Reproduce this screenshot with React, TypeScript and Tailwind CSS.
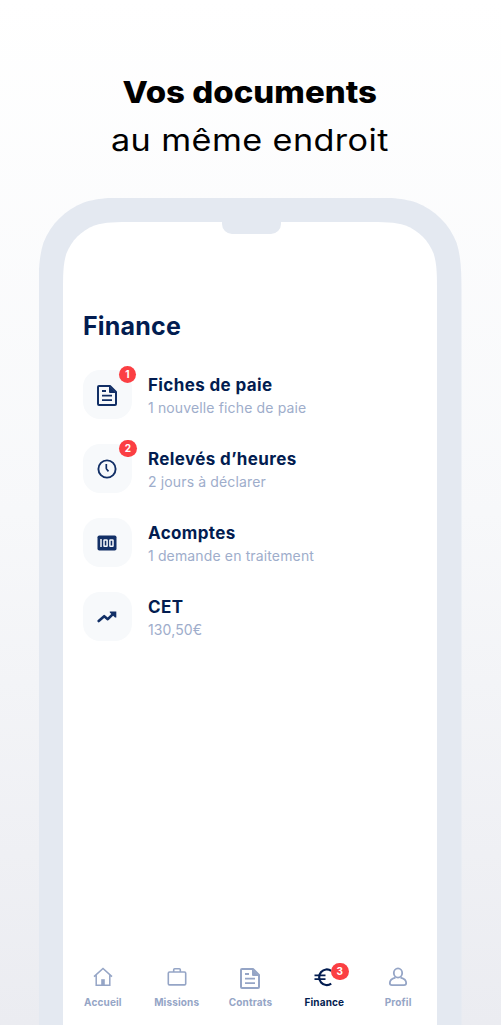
import type { ReactNode } from "react";

function phoneShape(w: number, h: number, r: number) {
  const p = (n: number) => +(n * r).toFixed(2);
  const x = (n: number) => +(w - n * r).toFixed(2);
  return `path("M0 ${h}V${p(1.45)}C0 ${p(1.05)} 0 ${p(0.85)} ${p(0.068)} ${p(0.63)}C${p(0.165)} ${p(0.373)} ${p(0.373)} ${p(0.165)} ${p(0.63)} ${p(0.068)}C${p(0.85)} 0 ${p(1.05)} 0 ${p(1.45)} 0H${x(1.45)}C${x(1.05)} 0 ${x(0.85)} 0 ${x(0.63)} ${p(0.068)}C${x(0.373)} ${p(0.165)} ${x(0.165)} ${p(0.373)} ${x(0.068)} ${p(0.63)}C${w} ${p(0.85)} ${w} ${p(1.05)} ${w} ${p(1.45)}V${h}Z")`;
}

function DocIcon() {
  return (
    <svg className="mt-px" width="20" height="21" viewBox="0 0 20 21" fill="none" stroke="currentColor" strokeWidth="2">
      <path d="M2 1H13L19 7V19Q19 20 18 20H2Q1 20 1 19V2Q1 1 2 1Z" strokeLinejoin="round" />
      <path d="M12 1L19 8H13Q12 8 12 7Z" fill="currentColor" stroke="none" />
      <path d="M5 6H9M5 10.6H15M5 15.2H15" strokeWidth="1.8" />
    </svg>
  );
}

function ClockIcon() {
  return (
    <svg width="20" height="20" viewBox="0 0 20 20" fill="none" stroke="currentColor">
      <circle cx="10" cy="10" r="8.6" strokeWidth="1.9" />
      <path d="M9.3 4.9V9.2Q9.3 9.8 9.7 10.3L11.5 12.4" strokeWidth="1.7" />
    </svg>
  );
}

function HundredIcon() {
  return (
    <svg width="20" height="16" viewBox="0 0 20 16">
      <rect x="0.5" y="0.5" width="19" height="15" rx="1.8" fill="currentColor" />
      <g fill="none" stroke="#f7f9fb" strokeWidth="1.5">
        <path d="M4 4.1V12" />
        <rect x="7" y="4.9" width="3.1" height="6.4" rx="0.4" />
        <rect x="12.9" y="4.9" width="3.1" height="6.4" rx="0.4" />
      </g>
    </svg>
  );
}

function TrendIcon() {
  return (
    <svg width="20" height="12" viewBox="0 0 20 12">
      <path d="M1.7 10L7.2 5.2L10.8 8.2L16.2 2.8" fill="none" stroke="currentColor" strokeWidth="2.6" strokeLinecap="round" strokeLinejoin="round" />
      <path d="M12.8 0.5H19.3V6.5H18L12.8 1.6Z" fill="currentColor" />
    </svg>
  );
}

function HomeIcon() {
  return (
    <svg width="20" height="20" viewBox="0 0 20 20" fill="none" stroke="currentColor" strokeWidth="1.5">
      <path d="M1 9.6L10 1.5L19 9.6M3.2 8V18.3H16.8V8" />
      <path d="M8.2 12.2H11.8V18.5H8.2Z" fill="currentColor" stroke="none" />
    </svg>
  );
}

function BriefcaseIcon() {
  return (
    <svg width="20" height="20" viewBox="0 0 20 20" fill="none" stroke="currentColor" strokeWidth="1.6">
      <rect x="1.3" y="5" width="17.4" height="12.9" rx="1.2" />
      <path d="M6.7 5V2.8Q6.7 1.8 7.7 1.8H12.3Q13.3 1.8 13.3 2.8V5" />
    </svg>
  );
}

function EuroIcon() {
  return (
    <svg width="20" height="20" viewBox="0 0 20 20" fill="none" stroke="currentColor" strokeWidth="2.2">
      <path d="M17.2 3.9A7.6 7.8 0 1 0 17.2 16.6" />
      <path d="M0.5 8.3H11.5M0.5 12.2H11.5" strokeWidth="1.8" />
    </svg>
  );
}

function UserIcon() {
  return (
    <svg width="20" height="20" viewBox="0 0 20 20" fill="none" stroke="currentColor" strokeWidth="1.8">
      <ellipse cx="10" cy="6" rx="4.2" ry="4.6" />
      <path d="M7.5 10.6C4 11.4 1.8 13.2 1.8 16.1Q1.8 18.2 4 18.2H16Q18.2 18.2 18.2 16.1C18.2 13.2 16 11.4 12.5 10.6" />
    </svg>
  );
}

const rows: { title: string; detail: string; icon: ReactNode; badge?: string; badgeSize?: string }[] = [
  { title: "Fiches de paie", detail: "1 nouvelle fiche de paie", icon: <DocIcon />, badge: "1", badgeSize: "w-[17px]" },
  { title: "Relevés d’heures", detail: "2 jours à déclarer", icon: <ClockIcon />, badge: "2", badgeSize: "w-[18px]" },
  { title: "Acomptes", detail: "1 demande en traitement", icon: <HundredIcon /> },
  { title: "CET", detail: "130,50€", icon: <TrendIcon /> },
];

const tabs: { label: string; icon: ReactNode; badge?: string; active?: boolean }[] = [
  { label: "Accueil", icon: <HomeIcon /> },
  { label: "Missions", icon: <BriefcaseIcon /> },
  { label: "Contrats", icon: <DocIcon /> },
  { label: "Finance", icon: <EuroIcon />, badge: "3", active: true },
  { label: "Profil", icon: <UserIcon /> },
];

function Badge({ children, className }: { children: ReactNode; className: string }) {
  return (
    <span className={`absolute flex h-[17px] items-center justify-center rounded-full bg-[#fb3f43] text-[10px] font-bold text-white ${className}`}>
      {children}
    </span>
  );
}

export default function App() {
  return (
    <div className="flex h-[1025px] w-[501px] flex-col items-center overflow-hidden bg-linear-to-b from-white via-[#f7f8fa] to-[#ebecf1] pr-px font-['Inter',sans-serif]">
      <header className="flex h-[197.5px] shrink-0 flex-col items-center pt-[67.5px] text-[30px] leading-[48px] whitespace-nowrap text-black">
        <h1 className="scale-x-110 font-extrabold">Vos documents</h1>
        <p className="scale-x-[1.14] font-normal tracking-[0.35px]">au même endroit</p>
      </header>

      <div className="w-[423px] shrink-0 bg-[#e4e9f1] px-[24.5px] pt-[24.5px]" style={{ clipPath: phoneShape(423, 828, 72) }}>
        <main className="relative flex h-[803px] flex-col bg-white" style={{ clipPath: phoneShape(374, 803, 50) }}>
          <div className="absolute top-0 left-[159px] h-3 w-[59px] rounded-b-[10px] bg-[#e4e9f1]" />
          <h2 className="mt-[86px] ml-[20px] text-[25px] leading-[36px] font-bold tracking-[0.2px] text-[#021c50]">Finance</h2>
          <ul className="mt-[26px] ml-[19.5px] flex flex-col gap-[25px]">
            {rows.map((row) => (
              <li key={row.title} className="flex h-[49px] items-center gap-[16.5px]">
                <div className="relative flex size-[49px] items-center justify-center rounded-[17px] bg-[#f7f9fb] text-[#122f66]">
                  {row.icon}
                  {row.badge && <Badge className={`-top-1 left-[36.5px] ${row.badgeSize}`}>{row.badge}</Badge>}
                </div>
                <div className="flex flex-col pt-px whitespace-nowrap">
                  <span className="text-[17px] leading-[24px] font-bold tracking-[0.38px] text-[#021c50]">{row.title}</span>
                  <span className="text-[14px] leading-[21px] tracking-[0.14px] text-[#9eadcb]">{row.detail}</span>
                </div>
              </li>
            ))}
          </ul>
          <nav className="mt-auto mb-4 grid grid-cols-5 pr-[2px] pl-[3px]">
            {tabs.map((tab) => (
              <div key={tab.label} className={`flex flex-col items-center gap-2 ${tab.active ? "text-[#021c50]" : "text-[#95a5c6]"}`}>
                <div className="relative size-5">
                  {tab.icon}
                  {tab.badge && <Badge className="-top-[4px] left-[16.5px] w-[18px]">{tab.badge}</Badge>}
                </div>
                <span className="text-[10px] leading-[14px] font-bold tracking-[0.15px]">{tab.label}</span>
              </div>
            ))}
          </nav>
        </main>
      </div>
    </div>
  );
}
